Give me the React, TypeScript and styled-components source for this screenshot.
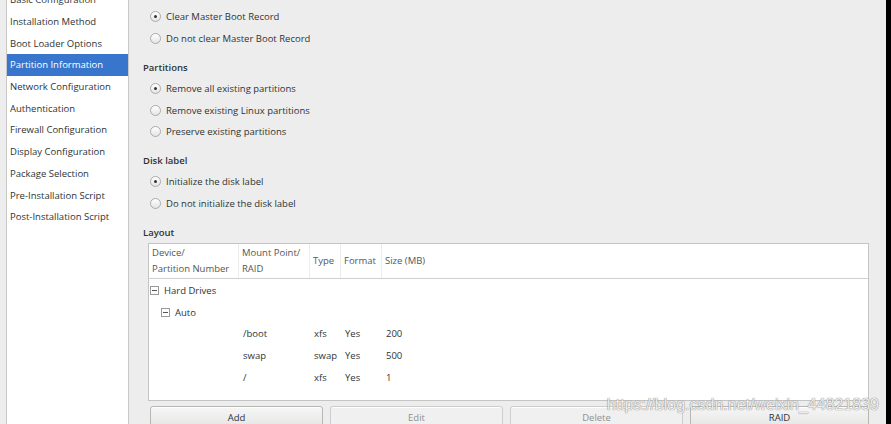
import * as React from 'react';
import styled, { createGlobalStyle } from 'styled-components';

const GlobalStyle = createGlobalStyle`
  html, body {
    margin: 0;
    padding: 0;
    background: #ededed;
  }
  body {
    font-family: 'Open Sans', 'DejaVu Sans', sans-serif;
    font-size: 9.5px;
    color: #2e3436;
    overflow: hidden;
  }
`;

const Window = styled.div`
  position: relative;
  display: flex;
  width: 891px;
  height: 424px;
  overflow: hidden;
  background: #ededed;
`;

const Sidebar = styled.div`
  flex: 0 0 121px;
  margin-left: 6px;
  background: #ffffff;
  border-left: 1px solid #c8c8c8;
  border-right: 1px solid #c8c8c8;
  overflow: hidden;
`;

const NavList = styled.div`
  margin-top: -11px;
  display: flex;
  flex-direction: column;
`;

const NavItem = styled.div<{ $active?: boolean }>`
  height: 21.7px;
  display: flex;
  align-items: center;
  padding-left: 3px;
  white-space: nowrap;
  background: ${p => (p.$active ? '#3875cc' : 'transparent')};
  color: ${p => (p.$active ? '#ffffff' : '#2e3436')};
`;

const Main = styled.div`
  flex: 1;
  padding-left: 14px;
  padding-right: 17px;
  display: flex;
  flex-direction: column;
  overflow: hidden;
`;

const Scroll = styled.div`
  margin-top: -15px;
  display: flex;
  flex-direction: column;
  gap: 7.5px;
`;

const Section = styled.div`
  display: flex;
  flex-direction: column;
`;

const Heading = styled.div`
  height: 21px;
  display: flex;
  align-items: center;
  font-weight: 600;
`;

const RadioRow = styled.label`
  height: 21.6px;
  display: flex;
  align-items: center;
  gap: 5px;
  padding-left: 7px;
`;

const RadioDot = styled.span<{ $checked?: boolean }>`
  position: relative;
  width: 9px;
  height: 9px;
  border-radius: 50%;
  border: 1px solid #a9abaa;
  background: linear-gradient(#ffffff, #e4e4e4);
  box-sizing: content-box;
  &::after {
    content: '';
    display: ${p => (p.$checked ? 'block' : 'none')};
    position: absolute;
    left: 3px;
    top: 3px;
    width: 3px;
    height: 3px;
    border-radius: 50%;
    background: #2e3436;
  }
`;

const TableBox = styled.div`
  margin-left: 5px;
  height: 156px;
  background: #ffffff;
  border: 1px solid #c4c4c4;
  display: flex;
  flex-direction: column;
`;

const cols = '90px 71px 31px 41px 1fr';

const HeaderRow = styled.div`
  display: grid;
  grid-template-columns: ${cols};
  height: 34px;
  border-bottom: 1px solid #cfcfcf;
  margin-bottom: 1px;
`;

const HeaderCell = styled.div`
  display: flex;
  align-items: center;
  padding-left: 3px;
  color: #555753;
  line-height: 16px;
  border-right: 1px solid #ececec;
  &:last-child {
    border-right: none;
  }
`;

const Row = styled.div`
  display: grid;
  grid-template-columns: ${cols};
  height: 21.7px;
  align-items: center;
`;

const Cell = styled.div`
  padding-left: 4px;
  white-space: nowrap;
`;

const TreeCell = styled.div<{ $level: number }>`
  grid-column: 1 / 3;
  display: flex;
  align-items: center;
  gap: 5px;
  padding-left: ${p => 1 + p.$level * 11}px;
`;

const Expander = styled.span`
  position: relative;
  width: 7px;
  height: 7px;
  border: 1px solid #9a9a9a;
  box-sizing: content-box;
  &::after {
    content: '';
    position: absolute;
    left: 1px;
    right: 1px;
    top: 3px;
    height: 1px;
    background: #555;
  }
`;

const ButtonBar = styled.div`
  margin-top: 5px;
  margin-left: 7px;
  display: grid;
  grid-template-columns: 173px 173px 173px 1fr;
  gap: 7px;
`;

const Button = styled.button<{ $disabled?: boolean }>`
  height: 25px;
  font-family: inherit;
  font-size: 9.5px;
  padding: 0 0 2px;
  border: 1px solid ${p => (p.$disabled ? '#cdcdcd' : '#b6b6b3')};
  border-radius: 3px;
  background: ${p =>
    p.$disabled ? '#f0f0f0' : 'linear-gradient(#f6f6f6, #e3e3e2)'};
  color: ${p => (p.$disabled ? '#8f9192' : '#2e3436')};
  box-shadow: inset 0 1px #ffffff;
`;

const Edge = styled.div`
  flex: 0 0 5px;
  background: #000000;
`;

const Watermark = styled.div`
  position: absolute;
  right: 12px;
  top: 396px;
  font-family: 'Liberation Sans', Arial, sans-serif;
  font-size: 16px;
  color: rgba(255, 255, 255, 0.85);
  text-shadow: 0 0 1px #8a8a8a, 0 0 1px #8a8a8a;
  pointer-events: none;
`;

const navItems = [
  'Basic Configuration',
  'Installation Method',
  'Boot Loader Options',
  'Partition Information',
  'Network Configuration',
  'Authentication',
  'Firewall Configuration',
  'Display Configuration',
  'Package Selection',
  'Pre-Installation Script',
  'Post-Installation Script'
];

const sections = [
  { title: 'Master Boot Record', options: ['Clear Master Boot Record', 'Do not clear Master Boot Record'] },
  {
    title: 'Partitions',
    options: ['Remove all existing partitions', 'Remove existing Linux partitions', 'Preserve existing partitions']
  },
  { title: 'Disk label', options: ['Initialize the disk label', 'Do not initialize the disk label'] }
];

const partitions = [
  { mount: '/boot', type: 'xfs', format: 'Yes', size: '200' },
  { mount: 'swap', type: 'swap', format: 'Yes', size: '500' },
  { mount: '/', type: 'xfs', format: 'Yes', size: '1' }
];

export default function App() {
  return (
    <Window>
      <GlobalStyle />
      <Sidebar>
        <NavList>
          {navItems.map(item => (
            <NavItem key={item} $active={item === 'Partition Information'}>
              {item}
            </NavItem>
          ))}
        </NavList>
      </Sidebar>
      <Main>
        <Scroll>
          {sections.map(s => (
            <Section key={s.title}>
              <Heading>{s.title}</Heading>
              {s.options.map((o, i) => (
                <RadioRow key={o}>
                  <RadioDot $checked={i === 0} />
                  {o}
                </RadioRow>
              ))}
            </Section>
          ))}
          <Section>
            <Heading>Layout</Heading>
            <TableBox>
              <HeaderRow>
                <HeaderCell>Device/<br />Partition Number</HeaderCell>
                <HeaderCell>Mount Point/<br />RAID</HeaderCell>
                <HeaderCell>Type</HeaderCell>
                <HeaderCell>Format</HeaderCell>
                <HeaderCell>Size (MB)</HeaderCell>
              </HeaderRow>
              <Row>
                <TreeCell $level={0}><Expander />Hard Drives</TreeCell>
              </Row>
              <Row>
                <TreeCell $level={1}><Expander />Auto</TreeCell>
              </Row>
              {partitions.map(p => (
                <Row key={p.mount}>
                  <Cell />
                  <Cell>{p.mount}</Cell>
                  <Cell>{p.type}</Cell>
                  <Cell>{p.format}</Cell>
                  <Cell>{p.size}</Cell>
                </Row>
              ))}
            </TableBox>
            <ButtonBar>
              <Button>Add</Button>
              <Button $disabled>Edit</Button>
              <Button $disabled>Delete</Button>
              <Button>RAID</Button>
            </ButtonBar>
          </Section>
        </Scroll>
      </Main>
      <Edge />
      <Watermark>https://blog.csdn.net/weixin_44821839</Watermark>
    </Window>
  );
}
